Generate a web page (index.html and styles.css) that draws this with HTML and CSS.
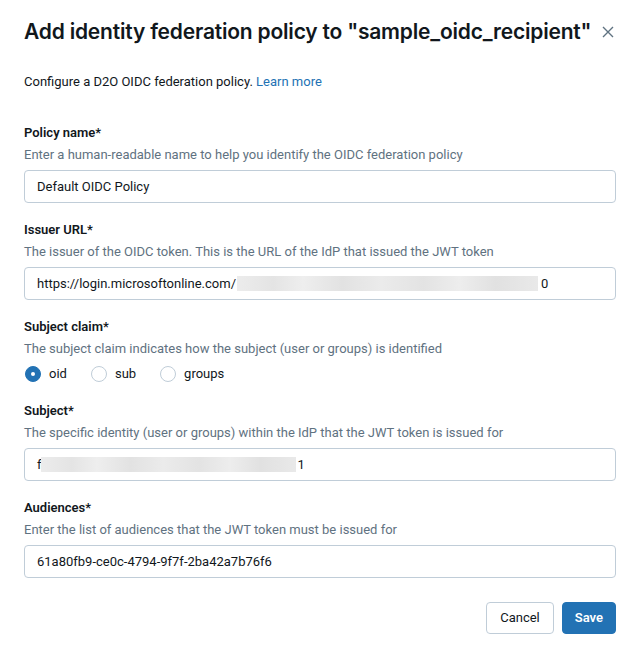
FILE: index.html
```html
<!DOCTYPE html>
<html lang="en">
<head>
<meta charset="utf-8">
<title>Add identity federation policy</title>
<link rel="stylesheet" href="styles.css">
</head>
<body>
<div class="modal">
  <div class="header">
    <h1 class="title">Add identity federation policy to "sample_oidc_recipient"</h1>
    <button class="close" aria-label="Close">
      <svg width="12" height="12" viewBox="0 0 12 12"><path d="M1 1L11 11M11 1L1 11" stroke="#5f7281" stroke-width="1.4" fill="none"/></svg>
    </button>
  </div>
  <p class="intro">Configure a D2O OIDC federation policy. <a class="link" href="#">Learn more</a></p>

  <div class="field">
    <div class="label">Policy name*</div>
    <div class="hint">Enter a human-readable name to help you identify the OIDC federation policy</div>
    <div class="input">Default OIDC Policy</div>
  </div>

  <div class="field">
    <div class="label">Issuer URL*</div>
    <div class="hint">The issuer of the OIDC token. This is the URL of the IdP that issued the JWT token</div>
    <div class="input">https://login.microsoftonline.com/<span class="blur blur-url"></span>0</div>
  </div>

  <div class="field">
    <div class="label">Subject claim*</div>
    <div class="hint">The subject claim indicates how the subject (user or groups) is identified</div>
    <div class="radios">
      <label class="radio"><span class="dot checked"></span>oid</label>
      <label class="radio"><span class="dot"></span>sub</label>
      <label class="radio"><span class="dot"></span>groups</label>
    </div>
  </div>

  <div class="field">
    <div class="label">Subject*</div>
    <div class="hint">The specific identity (user or groups) within the IdP that the JWT token is issued for</div>
    <div class="input">f<span class="blur blur-sub"></span>1</div>
  </div>

  <div class="field">
    <div class="label">Audiences*</div>
    <div class="hint">Enter the list of audiences that the JWT token must be issued for</div>
    <div class="input">61a80fb9-ce0c-4794-9f7f-2ba42a7b76f6</div>
  </div>

  <div class="footer">
    <button class="btn btn-default">Cancel</button>
    <button class="btn btn-primary">Save</button>
  </div>
</div>
</body>
</html>
```
FILE: styles.css
```css
* { box-sizing: border-box; }
html, body { margin: 0; padding: 0; background: #ffffff; }
body {
  font-family: Roboto, "Liberation Sans", Arial, sans-serif;
  color: #11171c;
  font-size: 13px;
  line-height: 20px;
}
.modal { padding: 18px 24px 0 24px; }
.header {
  display: flex;
  align-items: center;
  justify-content: space-between;
  height: 28px;
}
.title {
  margin: 0;
  font-family: Inter, Roboto, sans-serif;
  font-size: 21px;
  line-height: 28px;
  font-weight: 600;
  letter-spacing: -0.2px;
  white-space: nowrap;
}
.close {
  border: 0;
  background: none;
  padding: 0;
  width: 16px;
  height: 16px;
  display: flex;
  align-items: center;
  justify-content: center;
  margin-right: 0;
}
.intro { margin: 26px 0 31px 0; }
.link { color: #2272b4; text-decoration: none; }
.field { margin-bottom: 17px; }
.label { font-weight: 600; margin-bottom: 2px; }
.hint { color: #5f7281; margin-bottom: 5px; }
.input {
  height: 33px;
  border: 1px solid #c0cdd8;
  border-radius: 4px;
  padding: 0 12px;
  display: flex;
  align-items: center;
  white-space: nowrap;
}
.blur {
  display: inline-block;
  height: 15px;
  background: linear-gradient(90deg, #ececec 0%, #e4e4e4 12%, #eeeeee 22%, #e2e2e2 35%, #ebebeb 48%, #e3e3e3 62%, #ededed 74%, #e1e1e1 86%, #e9e9e9 100%);
  filter: blur(0.6px);
}
.blur-url { width: 301px; margin-left: 1px; margin-right: 3px; }
.blur-sub { width: 255px; margin-left: -1px; margin-right: 2px; }
.radios {
  display: flex;
  gap: 24px;
  height: 20px;
  align-items: center;
  padding-left: 1px;
  margin-top: 1px;
}
.radio { display: flex; align-items: center; gap: 8px; }
.dot {
  width: 16px;
  height: 16px;
  border-radius: 50%;
  border: 1px solid #c0cdd8;
  background: #fff;
  display: flex;
  align-items: center;
  justify-content: center;
}
.dot.checked { background: #2272b4; border-color: #2272b4; }
.dot.checked::after {
  content: "";
  width: 4px;
  height: 4px;
  border-radius: 50%;
  background: #fff;
}
.footer {
  display: flex;
  justify-content: flex-end;
  gap: 8px;
  margin-top: 24px;
}
.btn {
  height: 32px;
  padding: 0 12px;
  border-radius: 4px;
  font-family: inherit;
  font-size: 13px;
  line-height: 20px;
}
.btn-default { background: #fff; border: 1px solid #c0cdd8; color: #11171c; padding: 0 13px; }
.btn-primary { background: #2272b4; border: 1px solid #2272b4; color: #fff; font-weight: 600; }
```
